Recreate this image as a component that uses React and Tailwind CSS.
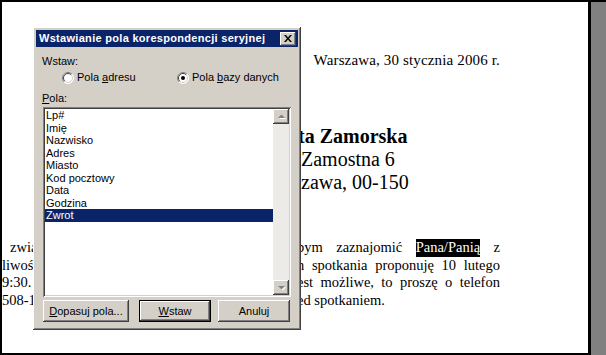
import React from "react";

const raised =
  "shadow-[inset_-1px_-1px_#404040,inset_1px_1px_#ffffff,inset_-2px_-2px_#808080,inset_2px_2px_#d4d0c8]";
const btnRaised =
  "shadow-[inset_-1px_-1px_#404040,inset_1px_1px_#ffffff,inset_-2px_-2px_#808080]";
const sunken =
  "shadow-[inset_1px_1px_#808080,inset_-1px_-1px_#ffffff,inset_2px_2px_#404040,inset_-2px_-2px_#d4d0c8]";

function Radio({ checked }) {
  return (
    <svg width="12" height="12" viewBox="0 0 12 12" className="shrink-0">
      <circle cx="6" cy="6" r="5.5" fill="#fff" />
      <path d="M2.1 9.9A5.5 5.5 0 0 1 9.9 2.1" stroke="#808080" fill="none" />
      <path d="M9.9 2.1A5.5 5.5 0 0 1 2.1 9.9" stroke="#ffffff" fill="none" />
      <path d="M2.8 9.2A4.5 4.5 0 0 1 9.2 2.8" stroke="#404040" fill="none" />
      <path d="M9.2 2.8A4.5 4.5 0 0 1 2.8 9.2" stroke="#d4d0c8" fill="none" />
      {checked && <circle cx="6" cy="6" r="2" fill="#000" />}
    </svg>
  );
}

function ScrollBtn({ down }) {
  return (
    <div className={`w-[16px] h-[15px] bg-[#d4d0c8] flex items-center justify-center ${btnRaised}`}>
      <svg width="9" height="6" viewBox="0 0 9 6">
        {down ? (
          <>
            <polygon points="2,2 9,2 5.5,5.5" fill="#fff" />
            <polygon points="1,1 8,1 4.5,4.5" fill="#808080" />
          </>
        ) : (
          <>
            <polygon points="2,5 9,5 5.5,1.5" fill="#fff" />
            <polygon points="1,4 8,4 4.5,0.5" fill="#808080" />
          </>
        )}
      </svg>
    </div>
  );
}

const fields = ["Lp#", "Imię", "Nazwisko", "Adres", "Miasto", "Kod pocztowy", "Data", "Godzina", "Zwrot"];

function Dialog() {
  return (
    <div
      className={`absolute left-[33px] top-[27px] w-[268px] h-[303px] bg-[#d4d0c8] p-[3px] flex flex-col font-['Liberation_Sans',Arial,sans-serif] text-[11px] text-black whitespace-nowrap ${raised}`}
    >
      <div className="h-[17px] bg-[#0a246a] flex items-center justify-between pl-[3px] pr-[2px]">
        <span className="text-white font-bold leading-[13px] tracking-[0.3px]">
          Wstawianie pola korespondencji seryjnej
        </span>
        <div className={`w-[16px] h-[14px] bg-[#d4d0c8] flex items-center justify-center ${btnRaised}`}>
          <svg width="8" height="7" viewBox="0 0 8 7">
            <path d="M0 0h2l2 2.5L6 0h2L5 3.5 8 7H6L4 4.5 2 7H0l3-3.5z" fill="#000" />
          </svg>
        </div>
      </div>

      <div className="pl-[6px] pr-[7px] flex flex-col">
        <div className="mt-[8px] leading-[13px]">Wstaw:</div>
        <div className="mt-[3px] h-[13px] flex items-center">
          <div className="ml-[20px] w-[115px] flex items-center gap-[3px]">
            <Radio />
            <span>
              Pola <span className="underline">a</span>dresu
            </span>
          </div>
          <div className="flex items-center gap-[3px]">
            <Radio checked />
            <span>
              Pola <span className="underline">b</span>azy danych
            </span>
          </div>
        </div>
        <div className="mt-[8px] leading-[13px]">
          <span className="underline">P</span>ola:
        </div>

        <div className={`mt-[2px] ml-[1px] w-[248px] h-[190px] bg-white p-[2px] flex ${sunken}`}>
          <div className="flex-1 flex flex-col">
            {fields.map((f, i) => (
              <div
                key={f}
                className={`h-[12.5px] leading-[12.5px] pl-[1px] ${
                  i === fields.length - 1 ? "bg-[#0a246a] text-white" : ""
                }`}
              >
                {f}
              </div>
            ))}
          </div>
          <div className="w-[16px] flex flex-col justify-between bg-[#ecebe7]">
            <ScrollBtn />
            <ScrollBtn down />
          </div>
        </div>

        <div className="mt-[3px] ml-[1px] flex items-center h-[22px]">
          <div className={`w-[86px] h-[22px] flex items-center justify-center ${btnRaised}`}>
            <span>
              <span className="underline">D</span>opasuj pola...
            </span>
          </div>
          <div className="ml-[10px] w-[72px] h-[22px] border border-black">
            <div className={`w-full h-full flex items-center justify-center ${btnRaised}`}>
              <span>
                <span className="underline">W</span>staw
              </span>
            </div>
          </div>
          <div className={`ml-[7px] w-[72px] h-[22px] flex items-center justify-center ${btnRaised}`}>
            Anuluj
          </div>
        </div>
      </div>
    </div>
  );
}

function JustLine({ words, highlight }) {
  return (
    <div className="w-[203px] flex justify-between">
      {words.map((w) => (
        <span key={w} className={w === highlight ? "bg-black text-white" : ""}>
          {w}
        </span>
      ))}
    </div>
  );
}

export default function App() {
  return (
    <div className="relative w-[606px] h-[355px] overflow-hidden bg-white flex">
      <div className="w-[588px] h-full border-l-2 border-t-2 border-b-2 border-black font-['Liberation_Serif','Times_New_Roman',serif] text-black whitespace-nowrap">
        <div className="pt-[50px] w-[498px] text-right text-[15px] leading-[17px] tracking-[0.15px]">
          Warszawa, 30 stycznia 2006 r.
        </div>

        <div className="mt-[56px] text-[20px] leading-[23px]">
          <div className="pl-[296px] font-bold">ta Zamorska</div>
          <div className="pl-[299px]">Zamostna 6</div>
          <div className="pl-[299px]">zawa, 00-150</div>
        </div>

        <div className="mt-[45px] text-[14.5px] leading-[17.5px] w-[498px]">
          <div className="flex justify-between">
            <span className="pl-[8px]">zwią</span>
            <JustLine words={["bym", "zaznajomić", "Pana/Panią", "z"]} highlight="Pana/Panią" />
          </div>
          <div className="flex justify-between">
            <span>liwości</span>
            <JustLine words={["n", "spotkania", "proponuję", "10", "lutego"]} />
          </div>
          <div className="flex justify-between">
            <span>9:30.</span>
            <JustLine words={["est", "możliwe,", "to", "proszę", "o", "telefon"]} />
          </div>
          <div className="flex justify-between">
            <span>508-1</span>
            <div className="w-[203px]">ed spotkaniem.</div>
          </div>
        </div>
      </div>
      <div className="w-[3px] h-full bg-black" />
      <div className="flex-1 h-full bg-[#808080] border-t-2 border-black" />
      <Dialog />
    </div>
  );
}
